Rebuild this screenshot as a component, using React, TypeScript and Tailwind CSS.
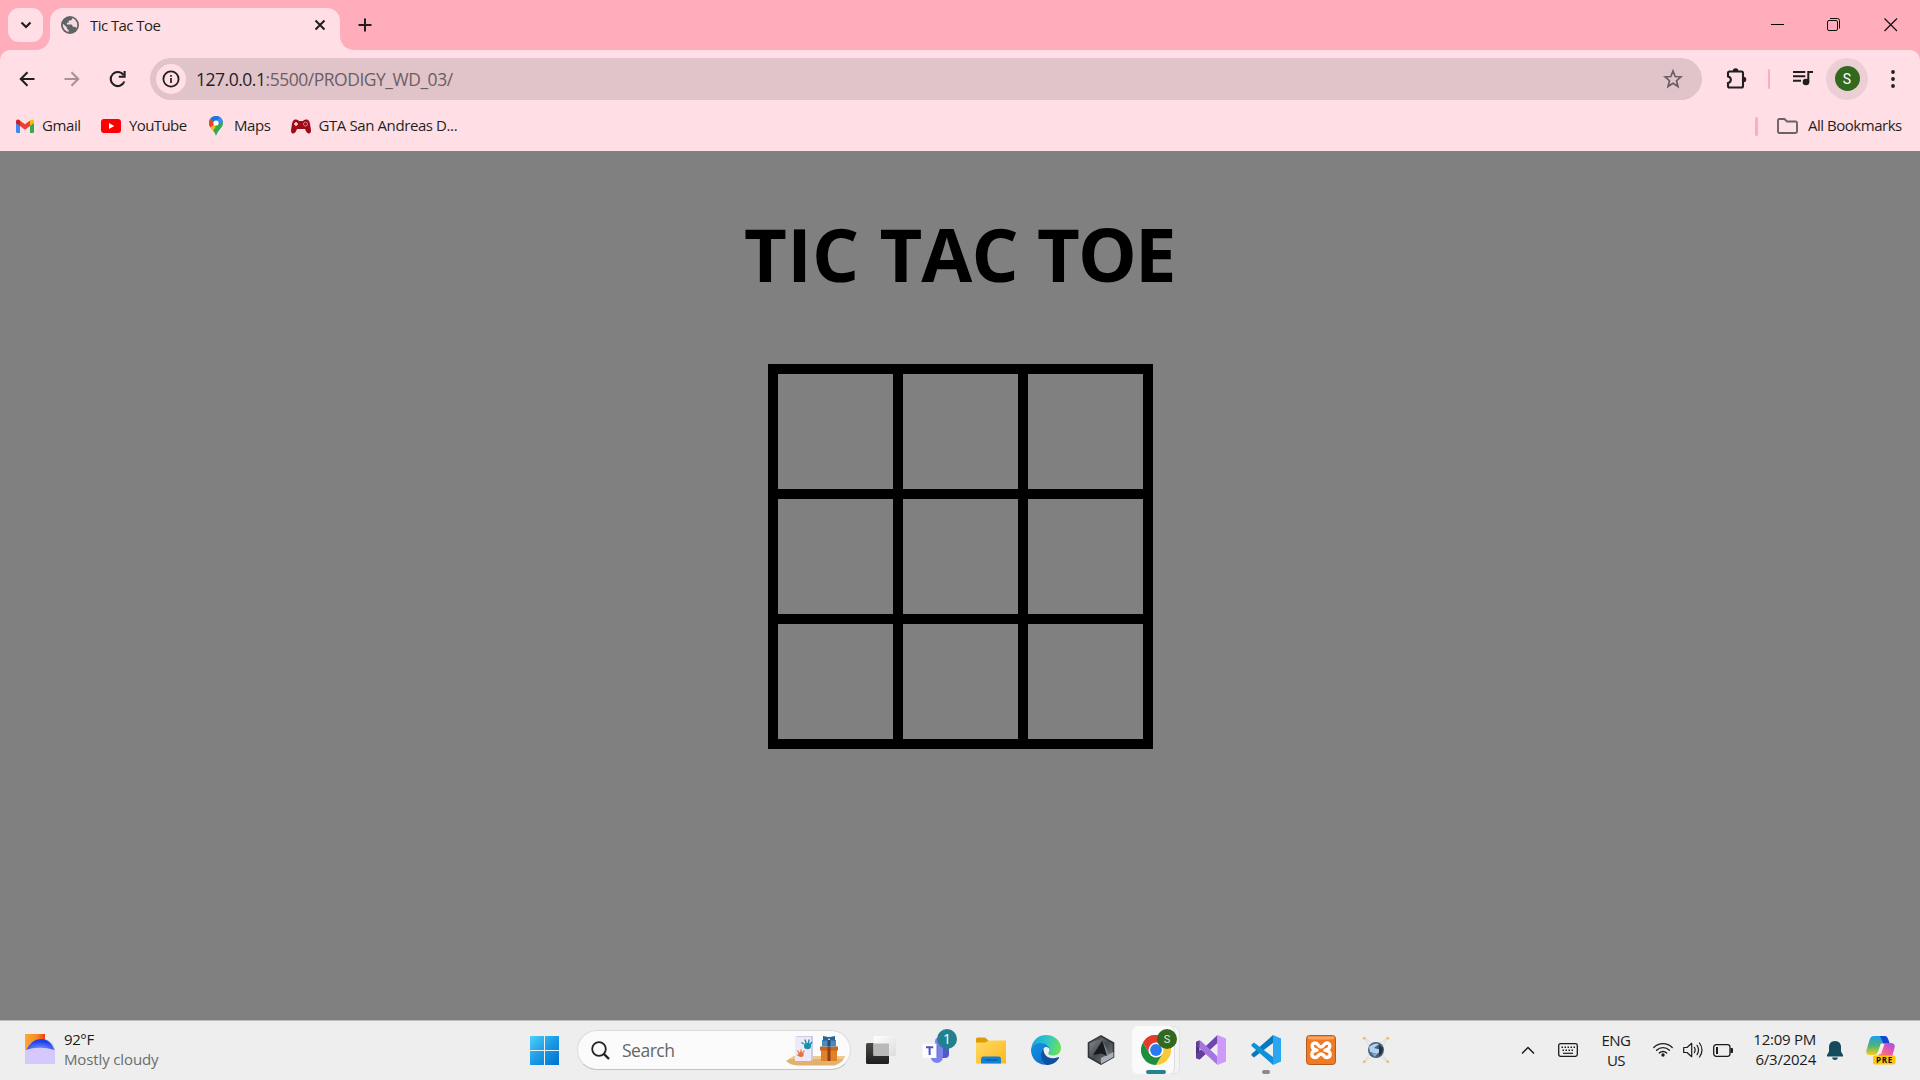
import type { ReactNode } from "react";

function Svg({ w, h, box, className = "", children }: { w: number; h: number; box?: string; className?: string; children: ReactNode }) {
  return (
    <svg width={w} height={h} viewBox={box ?? `0 0 ${w} ${h}`} fill="none" className={"block shrink-0 " + className}>
      {children}
    </svg>
  );
}

function TabStrip() {
  return (
    <div className="flex h-[50px] items-start bg-[#ffacbb]">
      <div className="mt-2 ml-2 flex h-[34px] w-[35px] items-center justify-center rounded-[11px] bg-[#ffdfe5]">
        <Svg w={12} h={8}><path d="M1.5 1.5 6 6 10.5 1.5" stroke="#1f1f1f" strokeWidth="2.2" /></Svg>
      </div>
      <div className="relative mt-[7.5px] ml-[7px] flex h-[42.5px] w-[290px] items-center rounded-t-[13px] bg-[#ffdfe5]">
        <Svg w={15} h={15} className="absolute bottom-0 -left-[15px]"><path d="M15 0V15H0C9 15 15 9 15 0Z" fill="#ffdfe5" /></Svg>
        <Svg w={15} h={15} className="absolute -right-[15px] bottom-0"><path d="M0 0V15H15C6 15 0 9 0 0Z" fill="#ffdfe5" /></Svg>
        <Svg w={18} h={18} box="2 2 20 20" className="mb-[7px] ml-[11px]">
          <circle cx="12" cy="12" r="10" fill="#5f6368" />
          <path fill="#ffdfe5" d="M14.500 4.300 14 6Q13.500 7 12 7H10.500V9.500H8.500V11.500H13.500Q15 12 15 14H17Q18 14 18.500 15L19.300 15.300A8 8 0 0 0 14.500 4.300ZM4.200 10.500 8.500 14.500V15.500Q8.500 17 10.500 17.200V19.900A8 8 0 0 1 4.200 10.500Z" opacity=".95" />
        </Svg>
        <span className="mb-[7px] ml-[11px] w-[220px] text-[15px] leading-5 tracking-[-0.560px] whitespace-nowrap text-[#1f1f1f]">Tic Tac Toe</span>
        <Svg w={12} h={12} className="absolute top-[11.500px] left-[264px]"><path d="M1.500 1.500 10.500 10.500M10.500 1.500 1.500 10.500" stroke="#1f1f1f" strokeWidth="2" /></Svg>
      </div>
      <Svg w={14} h={14} className="mt-[18px] ml-[17.500px]"><path d="M7 .5V13.500M.5 7H13.500" stroke="#1f1f1f" strokeWidth="2" /></Svg>
      <div className="mt-[18px] ml-auto flex">
        <Svg w={13} h={14}><path d="M0 6.500H13" stroke="#000" /></Svg>
        <Svg w={14} h={14} className="ml-[43px]">
          <rect x=".5" y="2.500" width="10" height="10" rx="1.500" stroke="#111" />
          <path d="M3 .5H10.500Q12.500 .5 12.500 2.500V10.500" stroke="#111" />
        </Svg>
        <Svg w={14} h={14} className="mr-[22px] ml-[43px]"><path d="M.5 .5 13 13M13 .5.5 13" stroke="#111" strokeWidth="1.200" /></Svg>
      </div>
    </div>
  );
}

function Toolbar() {
  return (
    <div className="bg-[#ffacbb]">
      <div className="flex h-[58px] items-center rounded-t-[10px] bg-[#ffdfe5]">
        <Svg w={16} h={16} className="ml-[19px]"><path d="M15.500 8H2M8.500 1.300 1.800 8l6.700 6.700" stroke="#1f1f1f" strokeWidth="2.100" /></Svg>
        <Svg w={16} h={16} className="ml-[29px]"><path d="M.5 8H14M7.500 1.300 14.200 8l-6.700 6.700" stroke="#a79397" strokeWidth="2.100" /></Svg>
        <Svg w={18} h={18} className="ml-[29px]">
          <path d="M15.300 11.500A7 7 0 1 1 14.600 5.200" stroke="#1f1f1f" strokeWidth="2.100" />
          <path d="M15.600 1V6.700H9.800" stroke="#1f1f1f" strokeWidth="2.100" />
        </Svg>
        <div className="ml-[23px] flex h-[42px] w-[1552px] items-center rounded-full bg-[#e0c4ca]">
          <div className="ml-[6px] flex size-[30px] items-center justify-center rounded-full bg-[#ffdfe5]">
            <Svg w={18} h={18}>
              <circle cx="9" cy="9" r="7.600" stroke="#1f1f1f" strokeWidth="1.800" />
              <path d="M9 8V13M9 5V6.700" stroke="#1f1f1f" strokeWidth="1.700" />
            </Svg>
          </div>
          <span className="ml-[10px] w-[1457px] text-[17.500px] leading-6 tracking-[-0.480px] whitespace-nowrap text-[#6b5e61]">
            <span className="text-[#1f1f1f]">127.0.0.1</span>:5500/PRODIGY_WD_03/
          </span>
          <Svg w={20} h={20} className="ml-[9.500px]">
            <path d="M10 2 12.200 7.500 18 7.900 13.500 11.700 15 17.500 10 14.300 5 17.500 6.500 11.700 2 7.900 7.800 7.500Z" stroke="#6a5f63" strokeWidth="1.700" />
          </Svg>
        </div>
        <Svg w={22} h={22} className="mb-[2px] ml-[23px]">
          <path d="M4.500 4.500H16.500Q18 4.500 18 6V19Q18 20.500 16.500 20.500H4.500Q3 20.500 3 19V16C6.800 15 6.800 10.500 3 9.500V6Q3 4.500 4.500 4.500Z" stroke="#1f1f1f" strokeWidth="2.100" />
          <path d="M7.800 4a2.800 2.800 0 0 1 5.600 0ZM18.500 9.700a2.800 2.800 0 0 1 0 5.600Z" fill="#1f1f1f" />
        </Svg>
        <div className="ml-[21px] h-5 w-[2px] rounded-full bg-[#ffacbb]" />
        <Svg w={20} h={16} className="mb-[3px] ml-[23px]">
          <path d="M0 2H12.300M0 6.300H12.300M0 10.700H8" stroke="#1f1f1f" strokeWidth="1.900" />
          <circle cx="13" cy="12" r="3.300" fill="#1f1f1f" />
          <path d="M15.300 12V1.900H20" stroke="#1f1f1f" strokeWidth="2" />
        </Svg>
        <div className="ml-[13px] flex size-[42px] items-center justify-center rounded-full bg-[#eccfd5]">
          <div className="mb-px flex size-[25px] items-center justify-center rounded-full bg-[#33691e] font-['Roboto'] text-[14px] leading-none text-white">S</div>
        </div>
        <Svg w={4} h={18} className="ml-[22.500px]">
          <g fill="#1f1f1f"><circle cx="2" cy="2" r="1.900" /><circle cx="2" cy="9" r="1.900" /><circle cx="2" cy="16" r="1.900" /></g>
        </Svg>
      </div>
    </div>
  );
}

const bookmarkText = "mb-[2px] text-[15px] leading-5 whitespace-nowrap text-[#1f1f1f] shrink-0";

function Bookmarks() {
  return (
    <div className="flex h-[43px] items-center bg-[#ffdfe5] pb-[7px]">
      <Svg w={18} h={14} className="ml-4">
        <path d="M0 3 4 6V14H1.200Q0 14 0 12.800Z" fill="#4285f4" />
        <path d="M14 6 18 3V12.800Q18 14 16.800 14H14Z" fill="#34a853" />
        <path d="M14 1.500C16-.3 18 .5 18 2.600V4L14 7Z" fill="#fbbc04" />
        <path d="M4 1.500 9 5.300 14 1.500V7L9 10.700 4 7Z" fill="#ea4335" />
        <path d="M4 1.500C2-.3 0 .5 0 2.600V4L4 7Z" fill="#c5221f" />
      </Svg>
      <span className={bookmarkText + " ml-[8px] w-[50px] tracking-[-0.400px]"}>Gmail</span>
      <Svg w={20} h={14} className="ml-[9px]"><rect width="20" height="14" rx="3" fill="#f00" /><path d="M8 4V10L13.300 7Z" fill="#fff" /></Svg>
      <span className={bookmarkText + " ml-[8px] w-[70px] tracking-[-0.600px]"}>YouTube</span>
      <Svg w={14} h={20} className="ml-[10px]">
        <clipPath id="pin"><path d="M7 0C3 0 0 3 0 7c0 5 5 6.500 7 13 2-6.500 7-8 7-13 0-4-3-7-7-7Z" /></clipPath>
        <g clipPath="url(#pin)">
          <path d="M0 0H14V20H0Z" fill="#34a853" />
          <path d="M0 12 8 6 6 12 3 16H0Z" fill="#fbbc04" />
          <path d="M0 2 6 7 0 13Z" fill="#ea4335" />
          <path d="M1 2 6 7 13 0H1Z" fill="#1a73e8" />
          <path d="M9 0H14V6L9 8 6 6 11 1Z" fill="#4285f4" />
        </g>
        <circle cx="7" cy="7" r="2.600" fill="#fff" />
      </Svg>
      <span className={bookmarkText + " ml-[11px] w-[47px] tracking-[-0.400px]"}>Maps</span>
      <Svg w={20} h={15} className="ml-[10px]">
        <path d="M4 .5Q7 0 8 2H12Q13 0 16 .5 18.500 1 19 5L20 11Q20 15 17.500 14.500 15.500 14 14 10H6Q4.500 14 2.500 14.500 0 15 0 11L1 5Q1.500 1 4 .5Z" fill="#9f0a18" />
        <path d="M5 3V7M3 5H7" stroke="#f3d6d9" strokeWidth="1.600" />
        <circle cx="14.500" cy="5" r="2" stroke="#d98a91" strokeWidth=".9" />
      </Svg>
      <span className={bookmarkText + " ml-[7.500px] w-[150px] tracking-[-0.400px]"}>GTA San Andreas D...</span>
      <div className="ml-auto h-[19px] w-[3px] rounded-full bg-[#ffacbb]" />
      <Svg w={21} h={16} className="ml-[19px]"><path d="M1 13.500V2.200Q1 1 2.200 1H7.500L10 3.500H18.500Q20 3.500 20 5V13.500Q20 15 18.500 15H2.500Q1 15 1 13.500Z" stroke="#6b6265" strokeWidth="1.900" /></Svg>
      <span className={bookmarkText + " mr-[13px] ml-[10px] w-[99px] tracking-[-0.480px]"}>All Bookmarks</span>
    </div>
  );
}

function Game() {
  return (
    <main className="flex h-[869px] flex-col items-center bg-[#808080]">
      <h1 className="mt-[53px] flex h-[100px] w-[432px] text-[74px] leading-[100px] font-bold whitespace-pre text-black">
        <span className="w-[135.500px] tracking-[0.300px]">{"TIC "}</span>
        <span className="w-[157.500px] tracking-[-1px]">{"TAC "}</span>
        <span className="w-[139px] tracking-[-1.900px]">TOE</span>
      </h1>
      <div className="mt-[60px] grid grid-cols-[115px_115px_115px] grid-rows-[115px_115px_115px] gap-[10px] bg-black p-[10px]">
        {Array.from({ length: 9 }, (_, i) => <div key={i} className="bg-[#808080]" />)}
      </div>
    </main>
  );
}

function Slot({ children }: { children: ReactNode }) {
  return <div className="relative flex h-[58px] w-[55px] shrink-0 items-center justify-center">{children}</div>;
}

function Weather() {
  return (
    <Svg w={30} h={30} className="mb-[2px] ml-[25px]">
      <defs>
        <linearGradient id="sun" x1="0" y1="0" x2="1" y2="0"><stop stopColor="#ffa63c" /><stop offset=".6" stopColor="#f88a22" /><stop offset="1" stopColor="#ee3e15" /></linearGradient>
        <radialGradient id="arc" cx=".5" cy=".8" r=".6"><stop stopColor="#7f9cf9" /><stop offset="1" stopColor="#1d41ea" /></radialGradient>
      </defs>
      <path d="M0 0H20V16H0Z" fill="url(#sun)" />
      <path d="M20 5Q28 7 30 15V22H10Z" fill="#c3c5f3" />
      <path d="M0 18Q6 5 16 5 26 5 30 18Z" fill="url(#arc)" />
      <path d="M0 16Q15 11.500 30 16V30H0Z" fill="#d5c8fd" />
    </Svg>
  );
}

function SearchBox() {
  return (
    <div className="ml-[18px] flex h-[40px] w-[274px] shrink-0 items-center overflow-hidden rounded-full border border-[#dcdcdc] border-b-[#c4c4c4] bg-[#fbfbfb]">
      <Svg w={19} h={19} className="ml-[13px]"><circle cx="8" cy="8" r="6.800" stroke="#222" strokeWidth="1.800" /><path d="M12.800 12.800 18 18" stroke="#222" strokeWidth="2.400" /></Svg>
      <span className="ml-[12px] w-[164px] text-[17.500px] leading-6 tracking-[-0.500px] text-[#666]">Search</span>
      <Svg w={59} h={32} className="mt-[2px]">
        <path d="M0 26 8 21H59Q56 29 48 30.500H12Q4 30 0 26Z" fill="#e2b06f" />
        <path d="M3 24 8 21H59L57 24Z" fill="#f0c88c" />
        <path d="M9 3 11 1H27V25H9Z" fill="#c9cce4" />
        <path d="M9 2H25V26H9Z" fill="#eceaf8" />
        <g fill="#1a8fb0"><ellipse cx="21.500" cy="11" rx="3.500" ry="3.200" /></g>
        <path d="M18 9 15.500 7.500M20 8 19 4.500M22.500 8 23 4.500M24 9.500 26 7" stroke="#1a8fb0" strokeWidth="1.400" />
        <ellipse cx="15" cy="19.500" rx="2.700" ry="2.500" fill="#e8703a" />
        <path d="M13 18 11.500 15.500M15 17.500 15 14.500M16.500 18 18.500 15.500M13 20.500 11 20" stroke="#e8703a" strokeWidth="1.200" />
        <path d="M35 12H51V26H35Z" fill="#e08128" />
        <path d="M34 11.500H52V15.500H34Z" fill="#c96518" />
        <path d="M36 5H50V11.500H36Z" fill="#4a8bbd" />
        <path d="M42 2 37 1V6L42 5 43 3 44 5 49 6V1L44 2Z" fill="#2c628f" />
        <path d="M41.500 5H44.500V11.500H41.500Z" fill="#204d75" />
        <path d="M41.500 12H44.500V26H41.500Z" fill="#8f3f16" />
      </Svg>
    </div>
  );
}

function AppIcons() {
  return (
    <div className="ml-[2px] flex">
      <Slot>
        <Svg w={30} h={28}>
          <defs>
            <linearGradient id="tv" x1="0" y1="0" x2="0" y2="1"><stop stopColor="#4a4a46" /><stop offset="1" stopColor="#1d1d1b" /></linearGradient>
            <linearGradient id="tw" x1="0" y1="0" x2="1" y2="1"><stop stopColor="#fff" /><stop offset="1" stopColor="#dcdcdc" /></linearGradient>
          </defs>
          <rect y="7" width="23" height="21" rx="1.500" fill="url(#tv)" />
          <rect x="7.500" width="22.500" height="20" rx="1.500" fill="url(#tw)" />
          <path d="M7.500 7.500H23V20H7.500Z" fill="#b9b9b7" />
        </Svg>
      </Slot>
      <Slot>
        <Svg w={28} h={26}>
          <circle cx="17" cy="4.500" r="4" fill="#7b83eb" />
          <path d="M20 9H27V17Q27 21 23 21H18Z" fill="#5059c9" />
          <path d="M9 8H21V18Q21 26 14.500 26 9 25 8.500 19Z" fill="#7b83eb" />
          <path d="M13 8H15.500V20H9Z" fill="#4b53bc" opacity=".5" />
          <rect x=".5" y="7" width="14" height="14" fill="#fdfdff" />
          <path d="M4 10.300H11.200M7.600 10.300V18" stroke="#4b53bc" strokeWidth="2" />
        </Svg>
        <div className="absolute top-[8px] left-[29px] flex size-[20px] items-center justify-center rounded-full bg-[#23808d] text-[14px] leading-none text-white">1</div>
      </Slot>
      <Slot>
        <Svg w={30} h={27}>
          <defs><linearGradient id="fo" x1="0" y1="0" x2="1" y2="1"><stop stopColor="#ffda66" /><stop offset="1" stopColor="#fcb81c" /></linearGradient></defs>
          <path d="M0 8V2Q0 .5 1.500 .5H9L12.500 3.500V8Z" fill="#dd9c08" />
          <path d="M0 5.500H9.500L12.500 3.500H30V26.500H0Z" fill="url(#fo)" />
          <path d="M5 26.500V22Q5 19.500 7.500 19.500H22.500Q25 19.500 25 22V26.500Z" fill="#1182d6" />
          <path d="M8.500 23H21.500" stroke="#0b57a1" strokeWidth="1.200" />
        </Svg>
      </Slot>
      <Slot>
        <Svg w={30} h={30}>
          <defs>
            <linearGradient id="e1" x1="0" y1=".3" x2="1" y2=".5"><stop stopColor="#1ba4e8" /><stop offset=".5" stopColor="#2fc6c5" /><stop offset="1" stopColor="#6be256" /></linearGradient>
            <linearGradient id="e2" x1="0" y1="0" x2=".5" y2="1"><stop stopColor="#1690e0" /><stop offset="1" stopColor="#0a74d2" /></linearGradient>
          </defs>
          <path d="M.5 12C2 4.500 8 0 15 0 24 0 30 6.500 30 13c0 5-3.800 7.500-8 7.500-4 0-5.300-1.500-4.500-3C20 14 17 9 11 8.500 6 8 2 10 .5 12Z" fill="url(#e1)" />
          <path d="M0 15C0 10 4.500 8 9.500 8 15 8 18.500 11.500 18.800 14.500 18 12.500 15.500 11.500 13.500 12.500 8 16 9.500 26 17 29.500 7.500 31 0 24 0 15Z" fill="url(#e2)" />
          <path d="M12.500 13C8.500 17 9 25.500 15.500 30 21 30 25.500 27.500 28 23 28.300 22 27.500 21.800 27 22.200 19 25.500 12 21 12.500 13Z" fill="#0d519f" />
        </Svg>
      </Slot>
      <Slot>
        <Svg w={28} h={30}>
          <defs><linearGradient id="hx" x1="0" y1="0" x2="1" y2="1"><stop stopColor="#93989e" /><stop offset=".5" stopColor="#454a50" /><stop offset="1" stopColor="#83898f" /></linearGradient></defs>
          <path d="M14 1 26.500 8V22L14 29 1.500 22V8Z" fill="url(#hx)" stroke="#30343a" strokeWidth="1.600" />
          <path d="M1.500 8 14 4V1Z" fill="#4c5157" />
          <path d="M14 29V23L26.500 17V22Z" fill="#a9aeb4" />
          <path d="M15.500 5.500 20 21 14.500 18.500 6 20Z" fill="#17191d" />
          <path d="M15.500 5.500 20 21 22 19Z" fill="#7b8087" />
        </Svg>
      </Slot>
      <Slot>
        <div className="absolute top-[5px] left-[4px] h-[48px] w-[48px] rounded-[6px] border border-[#e1e1e1] bg-[#f4f4f4]" />
        <div className="absolute top-[5px] left-[4px] h-[48px] w-[43px] rounded-[6px] border-r border-[#dcdcdc] bg-[#fafafa]" />
        <Svg w={30} h={30} className="relative">
          <path d="M15 15 2 7.500A15 15 0 0 1 28 7.500Z" fill="#e33b2e" />
          <path d="M15 7.500H28A15 15 0 0 1 15 30L21.500 18.700Z" fill="#fcc934" />
          <path d="M2 7.500A15 15 0 0 0 15 30L21.500 18.700 8.500 18.700Z" fill="#1e8e3e" />
          <path d="M15 7.500H28A15 15 0 0 0 2 7.500L8.500 18.700Z" fill="#e33b2e" />
          <circle cx="15" cy="15" r="7.500" fill="#fff" />
          <circle cx="15" cy="15" r="5.900" fill="#2a79f0" />
        </Svg>
        <div className="absolute top-[8px] left-[29px] flex size-[20px] items-center justify-center rounded-full bg-[#33691e] font-['Roboto'] text-[11px] leading-none text-[#dfe8da]">S</div>
        <div className="absolute top-[49px] left-[18px] h-[4px] w-[20px] rounded-full bg-[#25838f]" />
      </Slot>
      <Slot>
        <Svg w={30} h={30}>
          <path d="M0 7 3.500 5.500V24.500L0 23Z" fill="#52307c" />
          <path d="M3.500 24.500 21.500 8V0L3.500 17Z" fill="#7145b0" />
          <path d="M0 23 3.500 24.500 9.500 19 5 14.500 0 19Z" fill="#62409a" />
          <path d="M3.500 5.500 5 6 21.500 21.500V30L0 10V7Z" fill="#a576df" />
          <path d="M0 7 3.500 5.500V13L0 10Z" fill="#62409a" />
          <path d="M21.500 0 30 3.500V26.500L21.500 30Z" fill="#cf98fb" />
        </Svg>
      </Slot>
      <Slot>
        <Svg w={30} h={30}>
          <path d="M.5 20.500 3 22.500 22 8V0L.5 19Z" fill="#0878be" />
          <path d="M.5 9.500 3 7.500 22 22V30L.5 11Z" fill="#0e93da" />
          <path d="M22 0 30 3.500V26.500L22 30Z" fill="#2aa7f2" />
        </Svg>
        <div className="absolute top-[49px] left-[23.500px] h-[4px] w-[8px] rounded-full bg-[#8a8a8a]" />
      </Slot>
      <Slot>
        <Svg w={30} h={30}>
          <rect x=".5" y=".5" width="29" height="29" rx="3" fill="#f07a24" stroke="#b85a1c" />
          <path d="M2 1.500H28V4Q15 5 2 4Z" fill="#f7a566" />
          <path d="M11 15.200C5 15 5 8 9 8 12.500 8 12 12 15 12S17.500 8 21 8C25 8 25 15 19 15.200 25.500 15.500 25.500 22.500 21 22.500 17.500 22.500 18 19 15 19S12.500 22.500 9 22.500C4.500 22.500 4.500 15.500 11 15.200Z" stroke="#fff" strokeWidth="3.400" strokeLinejoin="round" />
        </Svg>
      </Slot>
      <Slot>
        <Svg w={28} h={28}>
          <path d="M2 2Q10 16 26 26M26 2Q18 16 2 26M2 2Q14 8 26 26M26 2Q14 8 2 26" stroke="#d6d3cc" strokeWidth=".7" />
          <circle cx="14" cy="14" r="8" fill="#46617c" />
          <path d="M7 11Q12 6 17 8L12 12 20 14 15 18 8 16Z" fill="#b3d0ee" />
          <path d="M17 9 21 12 20 17 17 20Z" fill="#26333f" />
          <path d="M9 17 15 18 13 21Z" fill="#7aaad8" />
          <g fill="#edb554"><circle cx="2.200" cy="2.200" r="1.300" /><circle cx="25.800" cy="2.200" r="1.300" /><circle cx="2.200" cy="25.800" r="1.300" /><circle cx="25.800" cy="25.800" r="1.300" /></g>
        </Svg>
      </Slot>
    </div>
  );
}

function Tray() {
  return (
    <div className="ml-auto flex items-center">
      <Svg w={14} h={9}><path d="M1 7.500 7 1.500 13 7.500" stroke="#1b1b1b" strokeWidth="1.500" /></Svg>
      <Svg w={20} h={14} className="mb-px ml-[23px]">
        <rect x=".7" y=".7" width="18.600" height="12.600" rx="1.800" stroke="#1b1b1b" strokeWidth="1.300" />
        <path d="M3.500 4.200H17M4.500 7.200H16" stroke="#1b1b1b" strokeWidth="1.500" strokeDasharray="1.500 1.500" />
        <path d="M5 10.300H15" stroke="#1b1b1b" strokeWidth="1.200" />
      </Svg>
      <div className="mb-px ml-[18px] w-[40px] text-center text-[15px] leading-[20px] tracking-[-0.500px] text-[#1b1b1b]">ENG<br />US</div>
      <Svg w={20} h={15} className="mb-px ml-[17px]">
        <g stroke="#1b1b1b" strokeWidth="1.300" strokeLinecap="round"><path d="M.8 5.500A13 13 0 0 1 19.200 5.500M3.600 8.300A9 9 0 0 1 16.400 8.300M6.300 11A5.300 5.300 0 0 1 13.700 11" /></g>
        <circle cx="10" cy="13" r="1.700" fill="#1b1b1b" />
      </Svg>
      <Svg w={20} h={16} className="ml-[10px]">
        <path d="M.7 5.500H4L8.700 1.300V14.700L4 10.500H.7Z" stroke="#1b1b1b" strokeWidth="1.200" strokeLinejoin="round" />
        <path d="M11.300 5.300Q13 8 11.300 10.700M14 3.300Q17 8 14 12.700M16.500 1Q21.500 8 16.500 15" stroke="#1b1b1b" strokeWidth="1.200" strokeLinecap="round" />
      </Svg>
      <Svg w={20} h={13} className="ml-[10px]">
        <rect x=".7" y=".7" width="16.300" height="11.600" rx="2.500" stroke="#1b1b1b" strokeWidth="1.300" />
        <path d="M3 3H5V10H3Z" fill="#1b1b1b" /><path d="M17.500 4H19Q20 4 20 5V8Q20 9 19 9H17.500Z" fill="#1b1b1b" />
      </Svg>
      <div className="mb-[3px] ml-[11px] w-[72px] text-right text-[15px] leading-[20px] tracking-[-0.250px] whitespace-nowrap text-[#1b1b1b]">12:09 PM<br />6/3/2024</div>
      <Svg w={16} h={19} className="ml-[11px]">
        <path d="M8 0C4 0 2 2.800 2 6V10.500L0 14V15.500H16V14L14 10.500V6C14 2.800 12 0 8 0ZM5 16.500H11Q10.500 19 8 19T5 16.500Z" fill="#144b5c" />
      </Svg>
      <Svg w={30} h={29} className="mt-px mr-[24px] ml-[23px]">
        <defs>
          <linearGradient id="c1" x1="0" y1="0" x2="0" y2="1"><stop stopColor="#1b9ff0" /><stop offset=".5" stopColor="#4fb277" /><stop offset="1" stopColor="#f5cf1c" /></linearGradient>
          <linearGradient id="c2" x1="1" y1="0" x2="0" y2="1"><stop stopColor="#a24df0" /><stop offset=".5" stopColor="#ee5ba0" /><stop offset="1" stopColor="#ff9448" /></linearGradient>
        </defs>
        <path d="M8 0H19Q21 0 22 3L23.500 7H17Q15 7 14 10L12 16Q11 19 8 19H4Q-.5 19 .5 14L3.500 4Q4.500 0 8 0Z" fill="url(#c1)" />
        <path d="M14 0H19Q21 0 22 3L23.500 7H17Z" fill="#1747d6" />
        <path d="M24 7Q30 7 28.500 12L26 21H10Q13 20 14 17L17 7Z" fill="url(#c2)" />
        <path d="M14.500 8H18.500L15 18H10.500Q13 16 14.500 8Z" fill="#f3f0f3" />
        <rect x="7" y="19.500" width="22.500" height="9" rx="2" fill="#ffc60a" />
        <text x="18.500" y="26.800" textAnchor="middle" fontFamily="Open Sans, sans-serif" fontSize="8" fontWeight="700" letterSpacing=".7" fill="#111">PRE</text>
      </Svg>
    </div>
  );
}

function Taskbar() {
  return (
    <div className="flex h-[60px] items-center border-t border-[#bdbdbd] bg-[#eeeeee] pb-px">
      <Weather />
      <div className="mb-[3px] ml-[9px] w-[466px] shrink-0 text-[15px] leading-[20px] text-[#1b1b1b]">
        <div className="tracking-[-0.400px]">92°F</div>
        <div className="tracking-[-0.130px] text-[#6c6c6c]">Mostly cloudy</div>
      </div>
      <Svg w={29} h={29} className="mt-px">
        <defs><linearGradient id="win" x1="0" y1="0" x2="29" y2="29" gradientUnits="userSpaceOnUse"><stop stopColor="#4fd0fb" /><stop offset=".5" stopColor="#1a9ae6" /><stop offset="1" stopColor="#0071ce" /></linearGradient></defs>
        <path d="M0 0H14V14H0ZM15 0H29V14H15ZM0 15H14V29H0ZM15 15H29V29H15Z" fill="url(#win)" />
      </Svg>
      <SearchBox />
      <AppIcons />
      <Tray />
    </div>
  );
}

export default function App() {
  return (
    <div className="flex h-[1080px] w-[1920px] flex-col overflow-hidden font-['Open_Sans','Noto_Sans',sans-serif]">
      <TabStrip />
      <Toolbar />
      <Bookmarks />
      <Game />
      <Taskbar />
    </div>
  );
}
